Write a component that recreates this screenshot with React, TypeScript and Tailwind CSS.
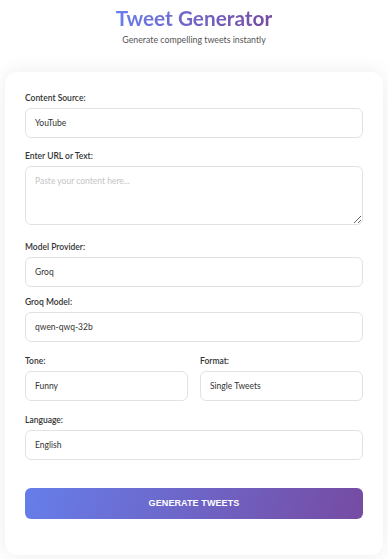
import React from 'react';

const font = { fontFamily: 'Lato, "Open Sans", sans-serif' };

function Field({ label, value, className = '' }: { label: string; value: string; className?: string }) {
    return (
        <div className={className}>
            <label className="mb-[4px] block text-[8.5px] leading-[12px] font-semibold text-[#333]">{label}</label>
            <div className="flex h-[30px] items-center rounded-[6px] border border-[#e2e2e2] bg-white px-[9px] text-[8.5px] text-[#333]">{value}</div>
        </div>
    );
}

export default function App() {
    return (
        <div className="min-h-screen bg-white px-[5px] pb-[4px]" style={font}>
            <div className="pt-[6px] text-center">
                <h1 className="inline-block bg-gradient-to-r from-[#667eea] to-[#764ba2] bg-clip-text text-[20.8px] leading-[24px] font-bold text-transparent">Tweet Generator</h1>
                <p className="mt-[2px] text-[8.8px] leading-[12px] text-[#555]">Generate compelling tweets instantly</p>
            </div>
            <div className="mt-[26px] rounded-[12px] bg-white px-[20px] pt-[20px] pb-[36px] shadow-[0_0_20px_rgba(0,0,0,0.08)]">
                <Field label="Content Source:" value="YouTube" />
                <div className="mt-[12px]">
                    <label className="mb-[4px] block text-[8.5px] leading-[12px] font-semibold text-[#333]">Enter URL or Text:</label>
                    <textarea
                        placeholder="Paste your content here..."
                        className="block h-[59px] w-full rounded-[6px] border border-[#e2e2e2] px-[9px] py-[8px] text-[8.5px] text-[#333] outline-none placeholder:text-[#c4c4c4]"
                    />
                </div>
                <Field className="mt-[16px]" label="Model Provider:" value="Groq" />
                <Field className="mt-[9px]" label="Groq Model:" value="qwen-qwq-32b" />
                <div className="mt-[13px] grid grid-cols-2 gap-[12px]">
                    <Field label="Tone:" value="Funny" />
                    <Field label="Format:" value="Single Tweets" />
                </div>
                <Field className="mt-[13px]" label="Language:" value="English" />
                <button
                    className="mt-[28px] flex h-[31px] w-full items-center justify-center rounded-[6px] text-[9px] font-bold tracking-[0.1px] text-white"
                    style={{ fontFamily: '"Liberation Sans", Arial, sans-serif', backgroundImage: 'linear-gradient(110deg, #667eea, #764ba2)' }}
                >
                    GENERATE TWEETS
                </button>
            </div>
        </div>
    );
}
